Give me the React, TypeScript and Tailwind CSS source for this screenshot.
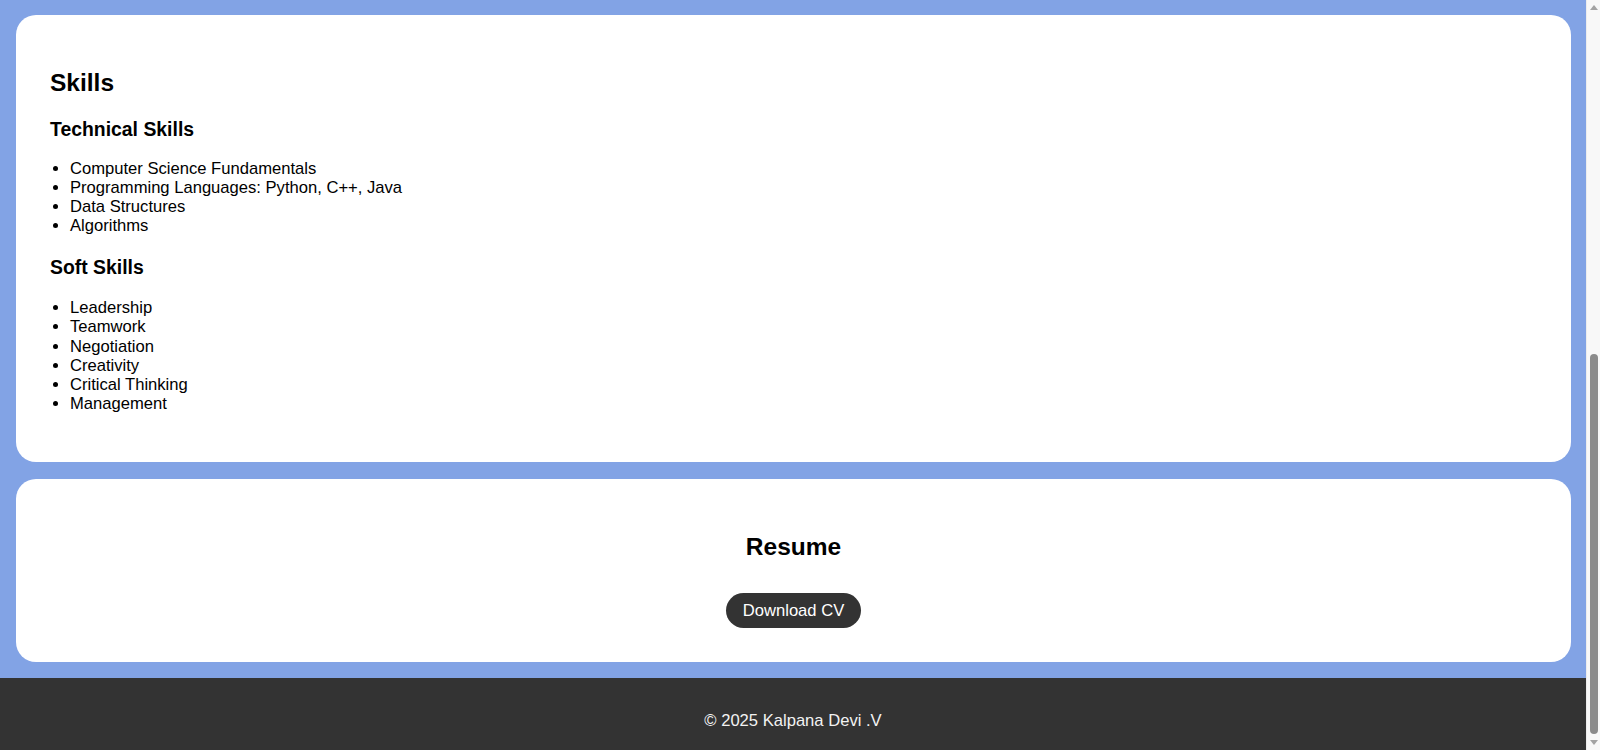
const technical = [
  "Computer Science Fundamentals",
  "Programming Languages: Python, C++, Java",
  "Data Structures",
  "Algorithms",
];

const soft = [
  "Leadership",
  "Teamwork",
  "Negotiation",
  "Creativity",
  "Critical Thinking",
  "Management",
];

const SkillList = ({ items, className }: { items: string[]; className: string }) => (
  <ul className={`list-disc pl-[20px] text-[16.6px] leading-[19.1px] ${className}`}>
    {items.map((item, i) => (
      <li key={i}>{item}</li>
    ))}
  </ul>
);

const Scrollbar = () => (
  <div className="w-[14px] h-full flex flex-col items-center bg-[#f8f8f8] border-l border-[#ececec]">
    <svg width="10" height="10" viewBox="0 0 10 10" className="mt-[2px]">
      <path d="M1 8 L5 3 L9 8 Z" fill="#a3a3a3" />
    </svg>
    <div className="mt-[342px] w-[8px] h-[380px] rounded-full bg-[#8b8b8b]" />
    <svg width="10" height="10" viewBox="0 0 10 10" className="mt-[4px]">
      <path d="M1 2 L5 7 L9 2 Z" fill="#a3a3a3" />
    </svg>
  </div>
);

export default function App() {
  return (
    <div
      className="w-[1600px] h-[750px] flex overflow-hidden text-black"
      style={{ fontFamily: '"Liberation Sans", Arial, sans-serif' }}
    >
      <div className="flex-1 h-full flex flex-col bg-[#82a3e5]">
        <div className="flex flex-col gap-[17px] pt-[15px] pl-[16px] pr-[15px]">
          <section className="bg-white rounded-[20px] pl-[34px] pt-[54px] pb-[49px]">
            <h2 className="text-[24.5px] leading-[28px] font-bold">Skills</h2>
            <h3 className="mt-[21px] text-[19.4px] leading-[22px] font-bold">Technical Skills</h3>
            <SkillList items={technical} className="mt-[19px]" />
            <h3 className="mt-[21px] text-[19.4px] leading-[22px] font-bold">Soft Skills</h3>
            <SkillList items={soft} className="mt-[20px]" />
          </section>
          <section className="bg-white rounded-[20px] pt-[54px] pb-[34px] flex flex-col items-center">
            <h2 className="text-[24.5px] leading-[28px] font-bold">Resume</h2>
            <button className="mt-[32px] h-[35px] px-[17px] rounded-full bg-[#333333] text-white text-[16.6px] leading-[19px]">
              Download CV
            </button>
          </section>
        </div>
        <footer className="mt-[16px] flex-1 bg-[#333333] pt-[33px] text-center text-[#f2f2f2] text-[16.6px] leading-[19px]">
          © 2025 Kalpana Devi .V
        </footer>
      </div>
      <Scrollbar />
    </div>
  );
}
